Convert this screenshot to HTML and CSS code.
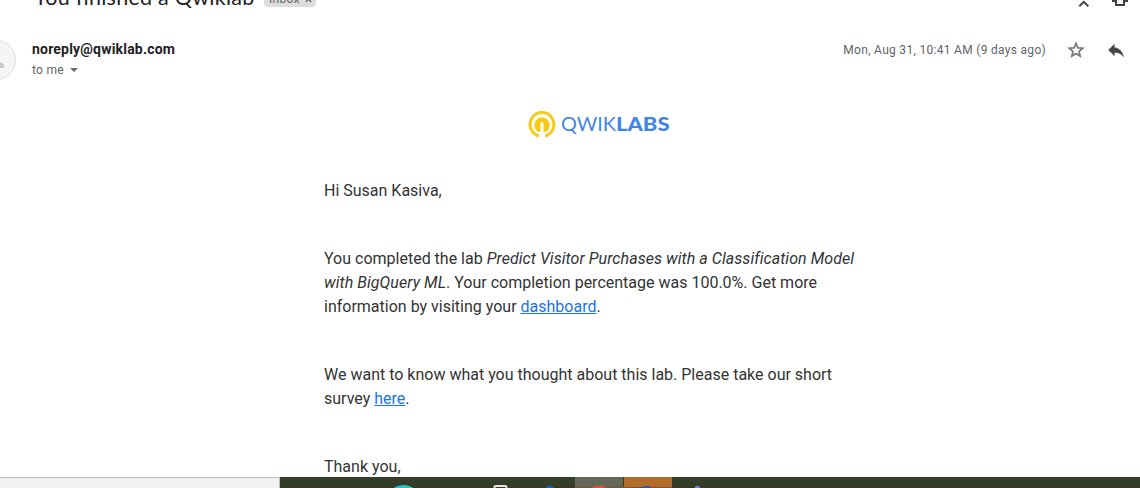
FILE: index.html
```html
<!DOCTYPE html>
<html lang="en">
<head>
<meta charset="utf-8">
<title>You finished a Qwiklab</title>
<link rel="stylesheet" href="styles.css">
</head>
<body>
<div class="screen">
  <header class="subject">
    <h1 class="subject-title">You finished a Qwiklab</h1>
    <span class="label">Inbox<span class="label-close">×</span></span>
    <svg class="subject-tools" width="60" height="8" viewBox="0 0 60 8">
      <path d="M4.300 6.300 8.800 1.800l4.500 4.500" fill="none" stroke="#444" stroke-width="2"/>
      <path d="M37 1h5M48 1h5M41 0v5h8V0" fill="none" stroke="#444" stroke-width="2"/>
    </svg>
  </header>
  <section class="sender">
    <svg class="avatar" width="16" height="42" viewBox="0 0 16 42">
      <circle cx="-4.500" cy="21" r="20" fill="#f5f5f5" stroke="#dedede"/>
      <path d="M-12 29v-2c0-3 5-4.500 8-4.500s8 1.500 8 4.500v2z" fill="#c6c6c6"/>
    </svg>
    <div class="who">
      <div class="address">noreply@qwiklab.com</div>
      <div class="recipient">to me <span class="caret"></span></div>
    </div>
    <div class="date">Mon, Aug 31, 10:41 AM (9 days ago)</div>
    <svg class="star" width="20" height="20" viewBox="0 0 24 24"><path fill="#757575" stroke="#757575" stroke-width=".5" d="m22 9.240-7.190-.62L12 2 9.190 8.630 2 9.240l5.460 4.730L5.820 21 12 17.270 18.180 21l-1.630-7.030zM12 15.400l-3.760 2.270 1-4.280-3.320-2.880 4.380-.38L12 6.100l1.710 4.040 4.380.38-3.320 2.880 1 4.280z"/></svg>
    <svg class="reply" width="20" height="20" viewBox="0 0 24 24"><path fill="#444" stroke="#444" stroke-width=".5" d="M10 9V5l-7 7 7 7v-4.100c5 0 8.500 1.600 11 5.100-1-5-4-10-11-11z"/></svg>
  </section>
  <main class="message">
    <svg class="logo" width="144" height="28" viewBox="0 0 144 28">
      <path d="M10.900 25A11.900 11.900 0 1 1 17.100 25" fill="none" stroke="#f4cb16" stroke-width="3"/>
      <path d="M10.500 21A7.800 7.800 0 1 1 17.500 21L15.500 20.500V12.500a1.500 1.500 0 0 0-3 0V20.500z" fill="#f4cb16"/>
      <text class="logo-light" x="33" y="20" textLength="55" lengthAdjust="spacingAndGlyphs">QWIK</text>
      <text class="logo-bold" x="88" y="20" textLength="53.500" lengthAdjust="spacingAndGlyphs">LABS</text>
    </svg>
    <p>Hi Susan Kasiva,</p>
    <p>You completed the lab <em>Predict Visitor Purchases with a Classification Model<br>with BigQuery ML</em>. Your completion percentage was 100.0%. Get more<br>information by visiting your <a href="#">dashboard</a>.</p>
    <p>We want to know what you thought about this lab. Please take our short<br>survey <a href="#">here</a>.</p>
    <p>Thank you,</p>
  </main>
  <footer class="taskbar">
    <div class="search"></div>
    <svg class="apps" width="860" height="11" viewBox="0 0 860 11">
      <defs><linearGradient id="edge"><stop offset="0" stop-color="#27b5e9"/><stop offset="1" stop-color="#43cba0"/></linearGradient></defs>
      <path d="M0 10.500H860" stroke="#3c3029"/>
      <path d="M295 0h48v11h-48z" fill="#636957"/>
      <path d="M344 0h48v11h-48z" fill="#b26d2a"/>
      <path d="M295 10.500h97" stroke="#79503b"/>
      <ellipse cx="123.500" cy="14" rx="11" ry="6" fill="url(#edge)"/>
      <path d="M214.500 11V10q0-1 1-1h10q1 0 1 1v1" fill="none" stroke="#e4e5df" stroke-width="2"/>
      <path d="m265 11 4-2h2l4 2z" fill="#0869b9"/>
      <ellipse cx="319" cy="13" rx="8" ry="4.200" fill="#dc5148"/>
      <path d="m357 11 9-2h4v2z" fill="#3b5295"/>
      <circle cx="417.500" cy="11.500" r="2.800" fill="#7b7fe0"/>
    </svg>
  </footer>
</div>
</body>
</html>
```
FILE: styles.css
```css
body {
  margin: 0;
  background: #fff;
  font-family: Roboto, "Liberation Sans", sans-serif;
}
.screen {
  display: flex;
  flex-direction: column;
  width: 1140px;
  height: 488px;
  overflow: hidden;
}
.subject {
  display: flex;
  align-items: flex-start;
  height: 38px;
  flex: none;
  overflow: hidden;
}
.subject-title {
  width: 220px;
  margin: -17px 10px 0 34px;
  font: 400 21.500px/28px Lato, sans-serif;
  letter-spacing: .25px;
  white-space: nowrap;
  color: #202124;
}
.label {
  display: flex;
  gap: 5px;
  width: 47px;
  height: 16px;
  margin-top: -9px;
  padding-left: 5px;
  border-radius: 4px;
  background: #ddd;
  color: #666;
  font-size: 12px;
  line-height: 16px;
  letter-spacing: .3px;
}
.label-close { font-size: 14px; }
.subject-tools { margin-left: 759px; }
.sender {
  display: flex;
  align-items: flex-start;
  height: 69px;
  flex: none;
}
.avatar { margin-top: 1px; }
.who {
  width: 300px;
  margin-left: 16px;
}
.address {
  font-size: 14px;
  font-weight: 700;
  line-height: 20px;
  letter-spacing: .2px;
  color: #202124;
  padding-top: 1px;
}
.recipient {
  display: flex;
  align-items: center;
  gap: 6px;
  padding-top: 1px;
  font-size: 12px;
  line-height: 20px;
  letter-spacing: .3px;
  color: #5f6368;
}
.caret {
  border: 4px solid transparent;
  border-top-color: #666;
  border-bottom: 0;
}
.date {
  margin-left: auto;
  padding-top: 2px;
  font-size: 12px;
  line-height: 20px;
  letter-spacing: .3px;
  color: #5f6368;
}
.star { margin: 2px 20px 0 20px; }
.reply { margin: 2px 14px 0 0; }
.message {
  width: 550px;
  height: 370px;
  margin-left: 324px;
  overflow: hidden;
  color: #333;
  font-size: 16px;
  line-height: 24px;
  white-space: nowrap;
}
.message em { letter-spacing: .055px; }
.logo {
  display: block;
  margin: 4px 0 40px 204px;
}
.logo-light, .logo-bold {
  font-family: Lato, sans-serif;
  font-size: 19.500px;
  fill: #4285e8;
}
.logo-bold { font-weight: 900; }
.message p { margin: 0 0 44px; }
.message a { color: #1a73e8; }
.taskbar {
  display: flex;
  height: 11px;
  flex: none;
  background: #343d28;
}
.search {
  box-sizing: border-box;
  width: 280px;
  border-top: 1px solid #bcbcbc;
  border-right: 1px solid #bcbcbc;
  background: #f1f1f1;
}
```
